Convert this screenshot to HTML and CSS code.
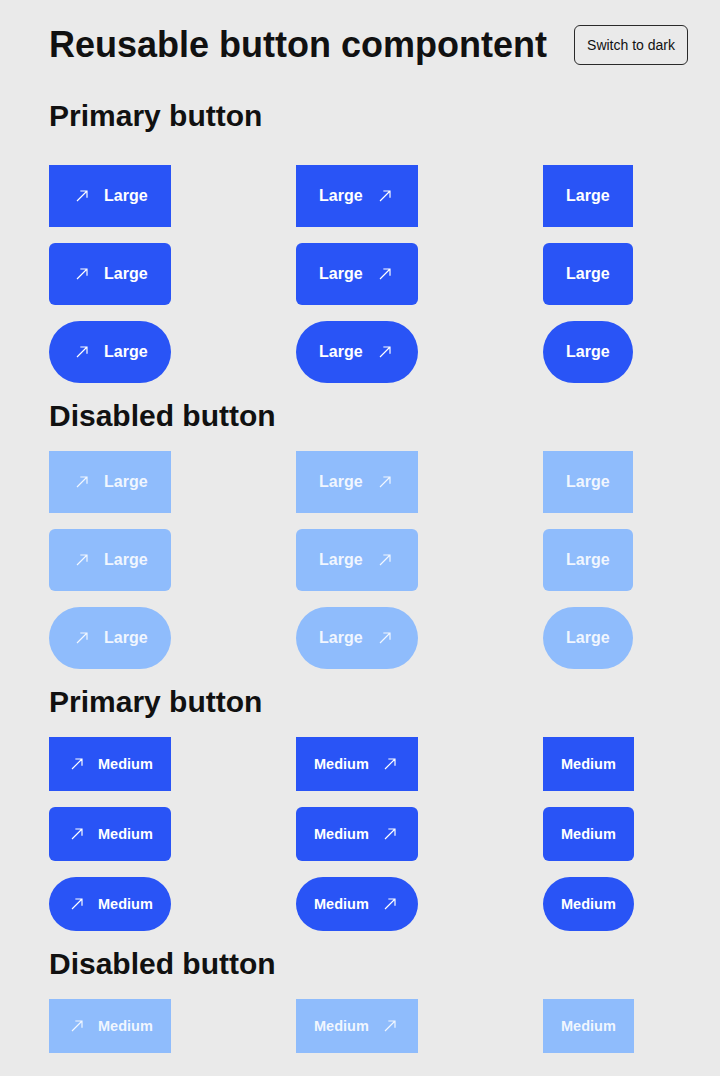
FILE: index.html
```html
<!DOCTYPE html>
<html lang="en">
<head>
<meta charset="utf-8">
<title>Reusable button compontent</title>
<link rel="stylesheet" href="styles.css">
</head>
<body>
<div class="page">
  <header class="header">
    <h1 class="title">Reusable button compontent</h1>
    <button class="theme-toggle" type="button">Switch to dark</button>
  </header>

  <h2 class="section-title section-title--first">Primary button</h2>
  <div class="grid">
    <button class="btn btn--lg btn--primary btn--square"><svg class="icon" viewBox="0 0 24 24"><path d="M6 18 18 6M10 6h8v8"/></svg><span>Large</span></button>
    <button class="btn btn--lg btn--primary btn--square"><span>Large</span><svg class="icon" viewBox="0 0 24 24"><path d="M6 18 18 6M10 6h8v8"/></svg></button>
    <button class="btn btn--lg btn--primary btn--square"><span>Large</span></button>
    <button class="btn btn--lg btn--primary btn--rounded"><svg class="icon" viewBox="0 0 24 24"><path d="M6 18 18 6M10 6h8v8"/></svg><span>Large</span></button>
    <button class="btn btn--lg btn--primary btn--rounded"><span>Large</span><svg class="icon" viewBox="0 0 24 24"><path d="M6 18 18 6M10 6h8v8"/></svg></button>
    <button class="btn btn--lg btn--primary btn--rounded"><span>Large</span></button>
    <button class="btn btn--lg btn--primary btn--pill"><svg class="icon" viewBox="0 0 24 24"><path d="M6 18 18 6M10 6h8v8"/></svg><span>Large</span></button>
    <button class="btn btn--lg btn--primary btn--pill"><span>Large</span><svg class="icon" viewBox="0 0 24 24"><path d="M6 18 18 6M10 6h8v8"/></svg></button>
    <button class="btn btn--lg btn--primary btn--pill"><span>Large</span></button>
  </div>

  <h2 class="section-title">Disabled button</h2>
  <div class="grid">
    <button class="btn btn--lg btn--disabled btn--square" disabled><svg class="icon" viewBox="0 0 24 24"><path d="M6 18 18 6M10 6h8v8"/></svg><span>Large</span></button>
    <button class="btn btn--lg btn--disabled btn--square" disabled><span>Large</span><svg class="icon" viewBox="0 0 24 24"><path d="M6 18 18 6M10 6h8v8"/></svg></button>
    <button class="btn btn--lg btn--disabled btn--square" disabled><span>Large</span></button>
    <button class="btn btn--lg btn--disabled btn--rounded" disabled><svg class="icon" viewBox="0 0 24 24"><path d="M6 18 18 6M10 6h8v8"/></svg><span>Large</span></button>
    <button class="btn btn--lg btn--disabled btn--rounded" disabled><span>Large</span><svg class="icon" viewBox="0 0 24 24"><path d="M6 18 18 6M10 6h8v8"/></svg></button>
    <button class="btn btn--lg btn--disabled btn--rounded" disabled><span>Large</span></button>
    <button class="btn btn--lg btn--disabled btn--pill" disabled><svg class="icon" viewBox="0 0 24 24"><path d="M6 18 18 6M10 6h8v8"/></svg><span>Large</span></button>
    <button class="btn btn--lg btn--disabled btn--pill" disabled><span>Large</span><svg class="icon" viewBox="0 0 24 24"><path d="M6 18 18 6M10 6h8v8"/></svg></button>
    <button class="btn btn--lg btn--disabled btn--pill" disabled><span>Large</span></button>
  </div>

  <h2 class="section-title">Primary button</h2>
  <div class="grid">
    <button class="btn btn--md btn--primary btn--square"><svg class="icon" viewBox="0 0 24 24"><path d="M6 18 18 6M10 6h8v8"/></svg><span>Medium</span></button>
    <button class="btn btn--md btn--primary btn--square"><span>Medium</span><svg class="icon" viewBox="0 0 24 24"><path d="M6 18 18 6M10 6h8v8"/></svg></button>
    <button class="btn btn--md btn--primary btn--square"><span>Medium</span></button>
    <button class="btn btn--md btn--primary btn--rounded"><svg class="icon" viewBox="0 0 24 24"><path d="M6 18 18 6M10 6h8v8"/></svg><span>Medium</span></button>
    <button class="btn btn--md btn--primary btn--rounded"><span>Medium</span><svg class="icon" viewBox="0 0 24 24"><path d="M6 18 18 6M10 6h8v8"/></svg></button>
    <button class="btn btn--md btn--primary btn--rounded"><span>Medium</span></button>
    <button class="btn btn--md btn--primary btn--pill"><svg class="icon" viewBox="0 0 24 24"><path d="M6 18 18 6M10 6h8v8"/></svg><span>Medium</span></button>
    <button class="btn btn--md btn--primary btn--pill"><span>Medium</span><svg class="icon" viewBox="0 0 24 24"><path d="M6 18 18 6M10 6h8v8"/></svg></button>
    <button class="btn btn--md btn--primary btn--pill"><span>Medium</span></button>
  </div>

  <h2 class="section-title">Disabled button</h2>
  <div class="grid">
    <button class="btn btn--md btn--disabled btn--square" disabled><svg class="icon" viewBox="0 0 24 24"><path d="M6 18 18 6M10 6h8v8"/></svg><span>Medium</span></button>
    <button class="btn btn--md btn--disabled btn--square" disabled><span>Medium</span><svg class="icon" viewBox="0 0 24 24"><path d="M6 18 18 6M10 6h8v8"/></svg></button>
    <button class="btn btn--md btn--disabled btn--square" disabled><span>Medium</span></button>
  </div>
</div>
</body>
</html>
```

FILE: styles.css
```css
html, body {
  margin: 0;
  padding: 0;
  background: #eaeaea;
}

body {
  font-family: "Liberation Sans", Arial, sans-serif;
  color: #111;
  overflow: hidden;
}

.page {
  padding: 24px 32px 0 49px;
  display: flex;
  flex-direction: column;
}

.header {
  display: flex;
  align-items: center;
  justify-content: space-between;
}

.title {
  margin: 0;
  font-size: 36px;
  font-weight: 700;
  line-height: 41px;
}

.theme-toggle {
  font-family: "Liberation Sans", Arial, sans-serif;
  font-size: 14px;
  color: #111;
  background: transparent;
  border: 1px solid #2a2a2a;
  border-radius: 6px;
  height: 40px;
  padding: 0 12px;
  margin-top: 1px;
}

.section-title {
  margin: 16px 0 18px;
  font-size: 30px;
  font-weight: 700;
  line-height: 34px;
}

.section-title--first {
  margin-top: 34px;
  margin-bottom: 32px;
}

.grid {
  display: grid;
  grid-template-columns: 247px 247px auto;
  row-gap: 16px;
  justify-items: start;
}

.btn {
  display: inline-flex;
  align-items: center;
  justify-content: center;
  border: 0;
  color: #fff;
  font-family: "Liberation Sans", Arial, sans-serif;
  font-weight: 700;
  cursor: pointer;
}

.btn--lg {
  height: 62px;
  padding: 0 23px;
  font-size: 16px;
  gap: 12px;
}

.btn--md {
  height: 54px;
  padding: 0 18px;
  font-size: 14.5px;
  gap: 11px;
}

.btn--primary {
  background: #2954f6;
}

.btn--disabled {
  background: #8fbcfc;
  color: rgba(255, 255, 255, 0.88);
  cursor: not-allowed;
}

.btn--square {
  border-radius: 0;
}

.btn--rounded {
  border-radius: 6px;
}

.btn--pill {
  border-radius: 31px;
}

.btn--md.btn--pill {
  border-radius: 27px;
}

.icon {
  width: 20px;
  height: 20px;
  flex: none;
  fill: none;
  stroke: currentColor;
  stroke-width: 1.4;
  stroke-linecap: butt;
  stroke-linejoin: miter;
}
```
